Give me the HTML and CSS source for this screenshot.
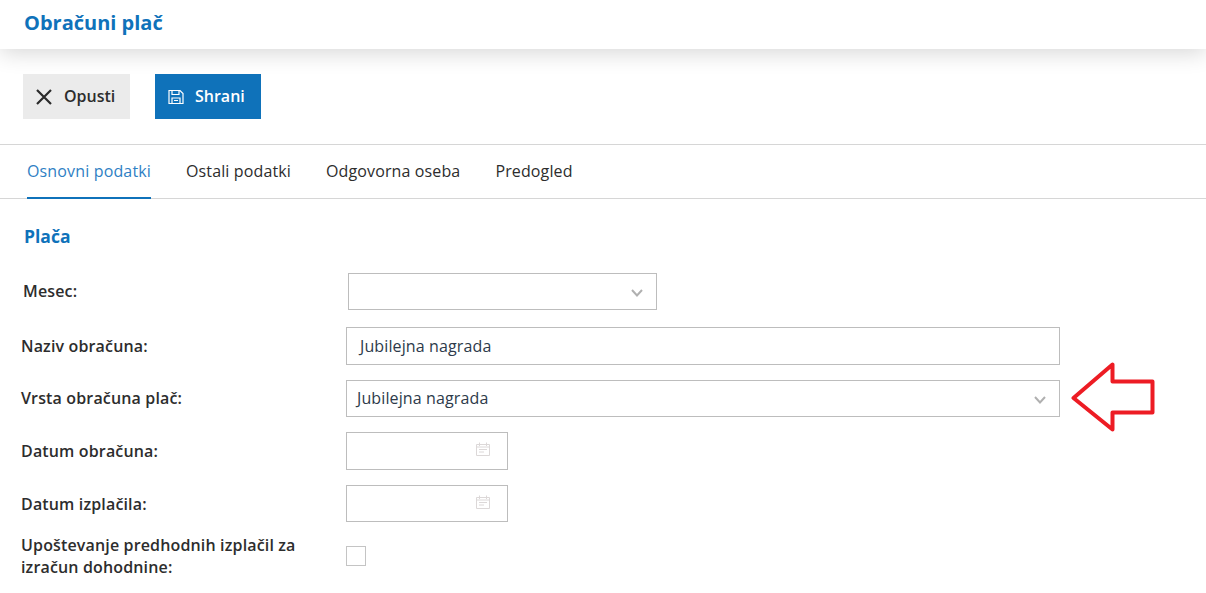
FILE: index.html
```html
<!DOCTYPE html>
<html lang="sl">
<head>
<meta charset="utf-8">
<title>Obračuni plač</title>
<link rel="stylesheet" href="styles.css">
</head>
<body>
<header class="top"><h1>Obračuni plač</h1></header>
<div class="toolbar">
  <button class="btn btn-grey" type="button">
    <svg class="ico-x" viewBox="0 0 16 16" width="16" height="16"><path d="M1 1 15 15M15 1 1 15" fill="none" stroke="#2b2b2b" stroke-width="2.200"/></svg>
    Opusti
  </button>
  <button class="btn btn-blue" type="button">
    <svg class="ico-save" viewBox="0 0 16 16" width="16" height="16"><path d="M1 1.500H12L15 4.500V14.500H1Z M4 1.500V5.500H11V1.500 M4 14.500V9H12V14.500 M6 11.500H10" fill="none" stroke="#fff" stroke-width="1.200"/></svg>
    Shrani
  </button>
</div>
<nav class="tabs">
  <a class="tab active">Osnovni podatki</a>
  <a class="tab">Ostali podatki</a>
  <a class="tab">Odgovorna oseba</a>
  <a class="tab">Predogled</a>
</nav>
<main class="content">
  <h2>Plača</h2>
  <div class="row row-month">
    <label>Mesec:</label>
    <div class="field month">
      <svg class="chev" viewBox="0 0 12 8" width="12" height="8"><path d="M1 1 6 6.500 11 1" fill="none" stroke="#b0b0b0" stroke-width="2"/></svg>
    </div>
  </div>
  <div class="row row-name">
    <label>Naziv obračuna:</label>
    <div class="field wide name"><span>Jubilejna nagrada</span></div>
  </div>
  <div class="row row-type">
    <label>Vrsta obračuna plač:</label>
    <div class="field wide type"><span>Jubilejna nagrada</span>
      <svg class="chev" viewBox="0 0 12 8" width="12" height="8"><path d="M1 1 6 6.500 11 1" fill="none" stroke="#b0b0b0" stroke-width="2"/></svg>
    </div>
  </div>
  <div class="row row-date1">
    <label>Datum obračuna:</label>
    <div class="field date">
      <svg class="cal" viewBox="0 0 14 14" width="14" height="14"><path d="M.5 2.500H13.500V13.500H.5ZM.5 5H13.500M3.500 .5V4M10.500 .5V4M3 7.500H11M3 10H8" fill="none" stroke="#dcd8d8" stroke-width="1"/></svg>
    </div>
  </div>
  <div class="row row-date2">
    <label>Datum izplačila:</label>
    <div class="field date">
      <svg class="cal" viewBox="0 0 14 14" width="14" height="14"><path d="M.5 2.500H13.500V13.500H.5ZM.5 5H13.500M3.500 .5V4M10.500 .5V4M3 7.500H11M3 10H8" fill="none" stroke="#dcd8d8" stroke-width="1"/></svg>
    </div>
  </div>
  <div class="row row-check">
    <label>Upoštevanje predhodnih izplačil za izračun dohodnine:</label>
    <div class="check"></div>
  </div>
</main>
<svg class="arrow" viewBox="0 0 84 70" width="84" height="70"><path d="M2.500 36 41.500 2.500V19.500H81.500V50.500H41.500V67.500Z" fill="none" stroke="#ed1c24" stroke-width="4" stroke-linejoin="round"/></svg>
</body>
</html>
```
FILE: styles.css
```css
* { box-sizing: border-box; }
html, body { margin: 0; padding: 0; }
body {
  position: relative;
  height: 593px;
  overflow: hidden;
  background: #fff;
  color: #2d2d2d;
  font-family: "Open Sans", sans-serif;
  font-size: 16px;
}
.top {
  height: 49px;
  padding: 10px 0 0 24px;
  background: #fff;
  box-shadow: 0 4px 22px rgba(0, 0, 0, .16);
}
.top h1 {
  margin: 0;
  font-size: 20px;
  line-height: 26px;
  font-weight: 700;
  color: #0f72ba;
}
.toolbar {
  display: flex;
  gap: 25px;
  height: 96px;
  padding: 25px 0 0 23px;
  border-bottom: 1px solid #d6d6d6;
}
.btn {
  display: flex;
  align-items: center;
  height: 45px;
  border: 0;
  font-family: inherit;
  font-size: 16px;
  line-height: 22px;
  font-weight: 600;
  padding: 0 0 2px;
}
.btn-grey { width: 107px; background: #ebebeb; color: #2d2d2d; padding-left: 13px; gap: 12px; }
.btn-blue { width: 106px; background: #0f72ba; color: #fff; padding-left: 13px; gap: 11px; }
.ico-x { flex: none; width: 16px; height: 16px; margin-top: 2px; }
.ico-save { flex: none; margin-top: 2px; }
.tabs {
  display: flex;
  gap: 35px;
  height: 54px;
  padding-left: 27px;
  border-bottom: 1px solid #d6d6d6;
}
.tab {
  height: 54px;
  padding-top: 15px;
  line-height: 22px;
  font-size: 16px;
  letter-spacing: .13px;
  color: #2d2d2d;
}
.tab.active {
  color: #2f7fc4;
  letter-spacing: .15px;
  border-bottom: 2px solid #0f72ba;
}
.content { padding: 0 0 0 21px; }
h2 {
  margin: 25px 0 0 3px;
  font-size: 17.500px;
  line-height: 24px;
  font-weight: 700;
  color: #0f72ba;
}
.row { display: flex; align-items: center; }
.row label {
  flex: none;
  width: 325px;
  font-size: 16px;
  letter-spacing: .15px;
  line-height: 22px;
  font-weight: 600;
  color: #2d2d2d;
}
.field {
  position: relative;
  display: flex;
  align-items: center;
  border: 1px solid #bdbdbd;
  font-size: 16px;
  letter-spacing: .12px;
  color: #2d3a4a;
  background: #fff;
}
.field span { margin-top: -1px; }
.row-month { margin-top: 25px; padding-left: 2px; }
.row-month label, .row-name label, .row-type label { padding-bottom: 1px; }
.month { width: 309px; height: 37px; }
.row-name { margin-top: 17px; }
.wide { width: 714px; }
.name { height: 38px; padding-left: 13px; }
.row-type { margin-top: 15px; }
.type { height: 37px; padding-left: 10px; }
.row-date1 { margin-top: 15px; }
.row-date2 { margin-top: 15px; }
.date { width: 162px; height: 38px; }
.row-date2 .date { height: 37px; }
.row-check { margin-top: 12px; }
.row-check label { width: 280px; margin-right: 45px; }
.check { width: 20px; height: 20px; border: 1px solid #c4c4c4; }
.chev { position: absolute; right: 13px; top: 15px; }
.cal { position: absolute; right: 17px; top: 9px; }
.arrow { position: absolute; left: 1071px; top: 362px; }
```
